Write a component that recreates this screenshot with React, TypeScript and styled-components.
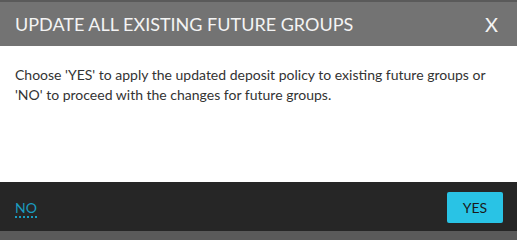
import React from "react";
import styled, { createGlobalStyle } from "styled-components";

const Global = createGlobalStyle`
  html, body { margin: 0; padding: 0; background: #5a5a5a; }
  body { font-family: Lato, "Open Sans", sans-serif; }
  * { box-sizing: border-box; }
`;

const Page = styled.div`
  width: 517px;
  height: 233px;
  overflow: hidden;
  background: #5a5a5a;
  padding-top: 2px;
  display: flex;
  flex-direction: column;
`;

const Dialog = styled.div`
  width: 517px;
  display: flex;
  flex-direction: column;
`;

const Header = styled.div`
  height: 44px;
  background: #737373;
  display: flex;
  align-items: center;
  justify-content: space-between;
  padding: 0 19px 0 15px;
`;

const Title = styled.h2`
  margin: 0;
  font-size: 18px;
  font-weight: 400;
  color: #f4f4f4;
`;

const Close = styled.button`
  border: 0;
  background: none;
  padding: 0;
  color: #f4f4f4;
  font-family: Lato, sans-serif;
  font-size: 20px;
  font-weight: 400;
  line-height: 1;
  cursor: pointer;
`;

const Body = styled.div`
  height: 136px;
  background: #ffffff;
  padding: 19px 15px 0 15px;
`;

const Message = styled.p`
  margin: 0;
  max-width: 480px;
  font-size: 14px;
  line-height: 20px;
  color: #333333;
`;

const Footer = styled.div`
  height: 49px;
  background: #262626;
  display: flex;
  align-items: center;
  justify-content: space-between;
  padding: 0 14px 0 15px;
`;

const NoLink = styled.a`
  font-size: 14px;
  color: #1a9cc0;
  text-decoration: none;
  border-bottom: 2px dotted #1a9cc0;
  line-height: 15px;
  padding-bottom: 1px;
  margin-top: 4px;
  cursor: pointer;
`;

const YesButton = styled.button`
  width: 56px;
  height: 31px;
  border: 0;
  border-radius: 2px;
  background: #29c3e5;
  color: #1a1a1a;
  font-family: Lato, sans-serif;
  font-size: 14px;
  cursor: pointer;
  margin-top: 2px;
`;

const Behind = styled.div`
  height: 2px;
  background: #5a5a5a;
`;

export default function App() {
  return (
    <>
      <Global />
      <Page>
        <Dialog>
          <Header>
            <Title>UPDATE ALL EXISTING FUTURE GROUPS</Title>
            <Close aria-label="close">X</Close>
          </Header>
          <Body>
            <Message>
              Choose 'YES' to apply the updated deposit policy to existing future groups or
              'NO' to proceed with the changes for future groups.
            </Message>
          </Body>
          <Footer>
            <NoLink>NO</NoLink>
            <YesButton>YES</YesButton>
          </Footer>
        </Dialog>
        <Behind />
      </Page>
    </>
  );
}
